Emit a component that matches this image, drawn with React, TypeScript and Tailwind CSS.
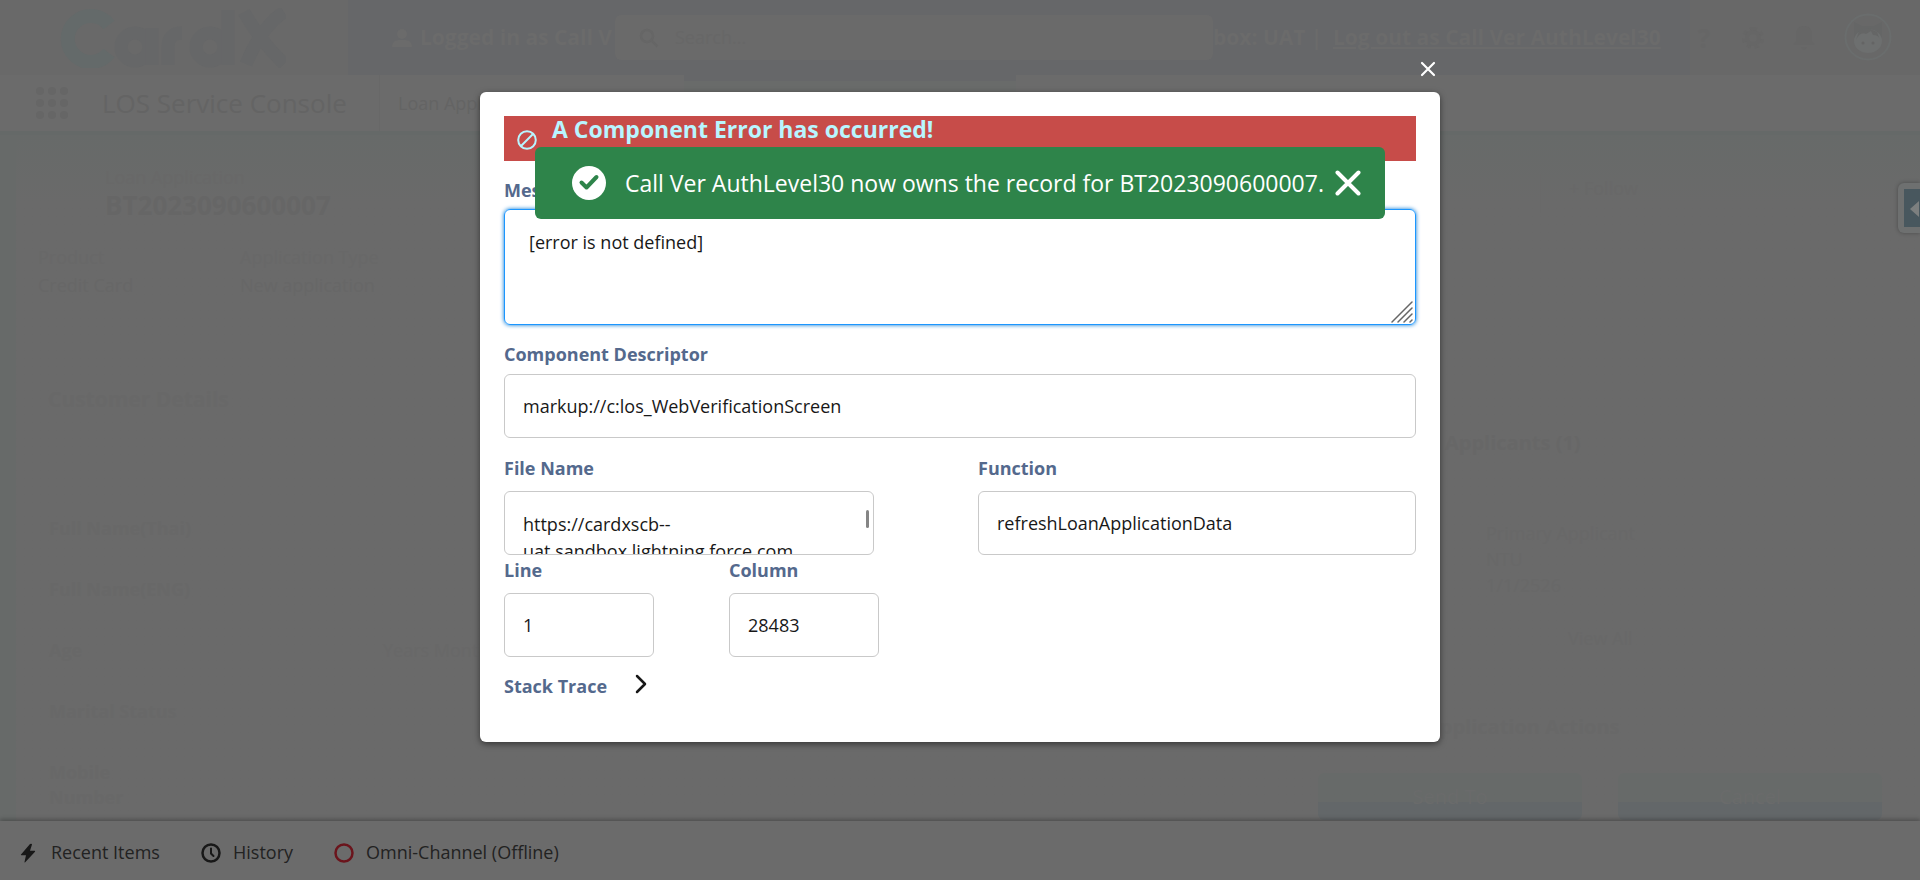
import React from "react";

const label = "block text-[18px] leading-7 font-bold text-[#54698d]";
const field =
  "block h-16 rounded-md border border-[#c9c9c9] bg-white px-[18px] text-[18px] text-[#181818] outline-none";

function Header() {
  return (
    <header className="flex h-[75px] items-stretch text-[#6b6b6b]">
      <div className="flex w-[348px] shrink-0 items-center bg-[#696969] pl-[60px]">
        <svg viewBox="0 0 226 60" className="h-[60px] w-[226px]" fill="none" stroke="#666768" strokeWidth="13" aria-label="CardX">
          <path d="M49 17A23 23 0 1 0 49 45" stroke="#646a6a" strokeWidth="14" />
          <circle cx="75" cy="39" r="14" />
          <path d="M92 20v37M108 57V39q0-14 14-14" />
          <circle cx="150" cy="39" r="14" />
          <path d="M168 2v55M184 4q14 26 40 52M224 4q-22 14-38 52" />
        </svg>
      </div>
      <div className="flex min-w-0 flex-1 items-center bg-[#666769]">
        <div className="flex w-[267px] shrink-0 items-center gap-2 overflow-hidden pl-11 text-[21px] font-bold whitespace-nowrap">
          <svg viewBox="0 0 20 20" className="size-5 shrink-0" fill="#6b6b6b">
            <circle cx="10" cy="6" r="5" />
            <path d="M0 19q0-7 7-7h6q7 0 7 7z" />
          </svg>
          <span>Logged in as Call V</span>
        </div>
        <label className="flex h-[45px] w-[598px] shrink-0 items-center gap-4 rounded-md bg-[#6a6a6a] pl-6">
          <svg viewBox="0 0 20 20" className="size-5 shrink-0" fill="none" stroke="#666666" strokeWidth="2.5">
            <circle cx="8" cy="8" r="6" />
            <path d="m12.500 12.500 6 6" />
          </svg>
          <input aria-label="Search" placeholder="Search..." className="w-full bg-transparent text-[18px] outline-none placeholder:text-[#676767]" />
        </label>
        <div className="w-[108px] shrink-0 text-right text-[21px] font-bold whitespace-nowrap">
          box: UAT |
        </div>
        <a href="#logout" className="ml-3 text-[21px] font-bold whitespace-nowrap underline">
          Log out as Call Ver AuthLevel30
        </a>
      </div>
      <div className="flex w-[230px] shrink-0 items-center gap-7 bg-[#686868] pl-1 text-[#666666]">
        <button aria-label="Help" className="w-5 text-[26px] leading-none font-bold">?</button>
        <button aria-label="Setup">
          <svg viewBox="0 0 22 22" className="size-[22px]" fill="none" stroke="#666666" strokeWidth="4">
            <circle cx="11" cy="11" r="6" />
            <path strokeWidth="3" strokeDasharray="4 4" d="M11 1.500a9.500 9.500 0 1 1 0 19a9.500 9.500 0 1 1 0-19" />
          </svg>
        </button>
        <button aria-label="Notifications">
          <svg viewBox="0 0 24 26" className="h-[26px] w-6" fill="#666666">
            <path d="M12 1q8 0 8 9v6l3 4H1l3-4v-6q0-9 8-9M9 22h6q-1 3-3 3t-3-3" />
          </svg>
        </button>
        <button aria-label="Profile">
          <svg viewBox="0 0 48 50" className="h-[50px] w-12" fill="none" stroke="#6a6d6d" strokeWidth="2">
            <circle cx="24" cy="24" r="22.500" />
            <path fill="#656666" stroke="none" d="M10 9l8 4h12l8-4v16H10z" />
            <ellipse cx="24" cy="28" rx="14" ry="12" fill="#6d6f6f" stroke="none" />
            <path fill="#656666" stroke="none" d="M12 27q4-9 10-6l5-3 2 4q6 0 7 5l-3-8-9-4-9 3z" />
            <circle cx="19" cy="30" r="1.500" fill="#646464" stroke="none" />
            <circle cx="29" cy="30" r="1.500" fill="#646464" stroke="none" />
          </svg>
        </button>
      </div>
    </header>
  );
}

function Nav() {
  return (
    <nav className="flex h-[60px] items-stretch border-b-4 border-[#656968] bg-[#6b6b6b] text-[#646464]">
      <button aria-label="App Launcher" className="flex w-[102px] shrink-0 items-center pl-9">
        <svg viewBox="0 0 32 32" className="size-8" fill="#666666">
          {[4, 16, 28].map((y) => [4, 16, 28].map((x) => <circle key={`${x}-${y}`} cx={x} cy={y} r="4" />))}
        </svg>
      </button>
      <div className="flex w-[278px] shrink-0 items-center border-r border-[#686868] text-[26px] whitespace-nowrap">LOS Service Console</div>
      <a href="#applications" className="flex w-[304px] shrink-0 items-center pl-[18px] text-[18px]">Loan Applications</a>
      <div className="w-[332px] shrink-0 border-t-[6px] border-[#666769] bg-[#696b6a]" />
    </nav>
  );
}

function Row({ name, children }: { name: string; children?: React.ReactNode }) {
  return (
    <div className="flex h-[61px] items-start">
      <div className="w-[110px] font-bold">{name}</div>
      {children}
    </div>
  );
}

function Record() {
  return (
    <main className="flex flex-1 overflow-hidden border-l-[16px] border-[#676a69] bg-linear-to-b from-[#676a69] to-[#6a6a6a] to-10% text-[18px] leading-7 whitespace-nowrap text-[#686868]">
      <div className="w-[1264px] shrink-0 pt-7">
        <div className="pl-[89px]">
          <div>Loan Application</div>
          <h1 className="text-[26px] font-bold text-[#666666]">BT2023090600007</h1>
        </div>
        <div className="flex pt-6 pl-[22px]">
          <div className="w-[202px]">
            <div>Product</div>
            <div className="text-[#676767]">Credit Card</div>
          </div>
          <div>
            <div>Application Type</div>
            <div className="text-[#676767]">New application</div>
          </div>
        </div>
        <h2 className="mt-[86px] pl-8 text-[21px] font-bold">Customer Details</h2>
        <div className="mt-[101px] pl-[33px]">
          <Row name="Full Name(Thai)" />
          <Row name="Full Name(ENG)" />
          <Row name="Age">
            <div className="pl-[224px]">Years Months</div>
          </Row>
          <Row name="Marital Status" />
          <Row name="Mobile" />
        </div>
        <div className="-mt-9 pl-[33px] font-bold">Number</div>
      </div>
      <div className="flex flex-1 flex-col pt-[39px]">
        <div className="ml-[260px] h-[39px] w-[340px] border-l border-[#696969] pl-7">+ Follow</div>
        <h2 className="mt-[216px] pl-[165px] text-[20px] font-bold text-[#676767]">Applicants (1)</h2>
        <div className="mt-[63px] pl-[206px] leading-[26px]">
          <div>Primary Applicant</div>
          <div>NTU</div>
          <div>1/1/2526</div>
        </div>
        <div className="mt-[26px] pl-[288px]">View All</div>
        <h2 className="mt-[61px] pl-[146px] text-[20px] font-bold">Application Actions</h2>
        <div className="mt-8 flex gap-9 pl-[38px] text-[#6a6b6b]">
          <button className="h-[47px] w-[264px] rounded-md bg-linear-to-b from-[#676a69] from-62% to-[#636769] to-62% text-[20px]">Send To</button>
          <button className="h-[47px] w-[264px] rounded-md bg-linear-to-b from-[#676a69] from-62% to-[#636769] to-62% text-[20px]">Cancel</button>
        </div>
      </div>
    </main>
  );
}

function Footer() {
  return (
    <footer className="relative flex h-[59px] items-center bg-[#6b6b6b] pt-1 pl-5 text-[18px] text-[#222222] shadow-[0_-2px_4px_rgba(0,0,0,0.25)]">
      <button className="flex w-[181px] items-center gap-[15px]">
        <svg viewBox="0 0 16 20" className="h-5 w-4" fill="#181818">
          <path d="M10 1 1 11.500q-.5.800.500.800H6L4.500 19q0 .8.700.200L15 8.800q.5-1-.5-1H10L12 1.500q0-1.200-2-.5" />
        </svg>
        Recent Items
      </button>
      <button className="flex w-[133px] items-center gap-3">
        <svg viewBox="0 0 20 20" className="size-5" fill="none" stroke="#181818" strokeWidth="2.500" strokeLinecap="round">
          <circle cx="10" cy="10" r="8.500" />
          <path strokeWidth="2" d="M10 5.500v5l2.500 2.500" />
        </svg>
        History
      </button>
      <button className="flex items-center gap-3">
        <svg viewBox="0 0 20 20" className="size-5" fill="none" stroke="#6b141c" strokeWidth="2.500">
          <circle cx="10" cy="10" r="8.500" />
        </svg>
        Omni-Channel (Offline)
      </button>
    </footer>
  );
}

function ErrorDialog() {
  return (
    <section
      role="dialog"
      aria-label="Component error"
      className="relative mt-[92px] h-fit w-1/2 rounded-md bg-white p-6 pb-[42px] shadow-[0_2px_6px_rgba(0,0,0,0.5)]"
    >
      <button aria-label="Close" className="absolute -top-[31px] right-1">
        <svg viewBox="0 0 16 16" className="size-4" stroke="#fff" strokeWidth="2.200" strokeLinecap="round">
          <path d="m2 2 12 12M14 2 2 14" />
        </svg>
      </button>
      <div className="flex h-[45px] items-start bg-[#c74c49] pl-[13px] text-[#b8f5ff]">
        <svg viewBox="0 0 20 20" className="mt-3.5 size-5" fill="none" stroke="#b8f5ff" strokeWidth="2">
          <circle cx="10" cy="10" r="8.800" />
          <path d="M4 16 16 4" />
        </svg>
        <h2 className="ml-[15px] text-[23px] leading-[26px] font-bold">A Component Error has occurred!</h2>
      </div>
      <label htmlFor="message" className={`${label} mt-[15px]`}>Message</label>
      <div className="relative mt-[5px]">
        <textarea
          id="message"
          defaultValue="[error is not defined]"
          className="block h-[116px] w-full resize-none rounded-md border border-[#1b96ff] px-6 pt-[19px] text-[18px] leading-[27px] text-[#181818] shadow-[0_0_4px_#0176d3] outline-none"
        />
        <svg viewBox="0 0 22 22" className="absolute right-[3px] bottom-[2px] size-[22px]" stroke="#666" strokeWidth="1.500" strokeLinecap="round">
          <path d="M1 21 21 1M7 21 21 7M13 21l8-8M19 21l2-2" />
        </svg>
      </div>
      <label htmlFor="descriptor" className={`${label} mt-[15px]`}>Component Descriptor</label>
      <input id="descriptor" defaultValue="markup://c:los_WebVerificationScreen" className={`${field} mt-1.5 w-full`} />
      <div className="mt-4 flex gap-[104px]">
        <div className="w-[370px]">
          <label htmlFor="file" className={label}>File Name</label>
          <div className="relative mt-[9px]">
            <textarea
              id="file"
              defaultValue="https://cardxscb--uat.sandbox.lightning.force.com"
              className={`${field} w-full resize-none overflow-hidden pt-[19px] leading-[27px]`}
            />
            <div className="absolute top-[19px] right-[5px] h-[18px] w-[3px] rounded-full bg-[#858585]" />
          </div>
        </div>
        <div className="min-w-0 flex-1">
          <label htmlFor="function" className={label}>Function</label>
          <input id="function" defaultValue="refreshLoanApplicationData" className={`${field} mt-[9px] w-full`} />
        </div>
      </div>
      <div className="mt-px flex gap-[75px]">
        <div className="w-[150px]">
          <label htmlFor="line" className={label}>Line</label>
          <input id="line" defaultValue="1" className={`${field} mt-[9px] w-full`} />
        </div>
        <div className="w-[150px]">
          <label htmlFor="column" className={label}>Column</label>
          <input id="column" defaultValue="28483" className={`${field} mt-[9px] w-full`} />
        </div>
      </div>
      <button className="mt-[15px] flex h-7 items-center gap-7">
        <span className={label}>Stack Trace</span>
        <svg viewBox="0 0 12 20" className="mb-1 h-5 w-3" fill="none" stroke="#181818" strokeWidth="2.500" strokeLinecap="round" strokeLinejoin="round">
          <path d="m2 2 8 8-8 8" />
        </svg>
      </button>
    </section>
  );
}

function Toast() {
  return (
    <div role="status" className="absolute top-[147px] left-1/2 flex h-[72px] w-[850px] -translate-x-1/2 items-center rounded-md bg-[#2e844a] pr-6 pl-[37px] text-white">
      <svg viewBox="0 0 34 34" className="size-[34px] shrink-0">
        <circle cx="17" cy="17" r="17" fill="#fff" />
        <path d="m9.500 16.500 5 5 10-10.500" fill="none" stroke="#2e844a" strokeWidth="4" strokeLinecap="round" strokeLinejoin="round" />
      </svg>
      <p className="ml-[19px] flex-1 text-[23px] whitespace-nowrap">Call Ver AuthLevel30 now owns the record for BT2023090600007.</p>
      <button aria-label="Dismiss">
        <svg viewBox="0 0 26 26" className="size-[26px]" stroke="#fff" strokeWidth="4" strokeLinecap="round">
          <path d="m2.500 2.500 21 21M23.500 2.500l-21 21" />
        </svg>
      </button>
    </div>
  );
}

export default function App() {
  return (
    <div className="relative flex h-screen flex-col overflow-hidden bg-[#6a6a6a] font-['Open_Sans','Noto_Sans',sans-serif]">
      <Header />
      <Nav />
      <Record />
      <Footer />
      <button aria-label="Open panel" className="absolute top-[183px] right-0 rounded-l-md bg-[#6e7070] py-1.5 pl-1.5 shadow-[0_0_4px_rgba(0,0,0,0.3)]">
        <svg viewBox="0 0 16 38" className="h-[38px] w-4">
          <path d="M0 0h16v38H0z" fill="#48575e" />
          <path d="m15 12-9 8 9 8z" fill="#7c7f7f" />
        </svg>
      </button>
      <div className="absolute inset-0 flex justify-center">
        <ErrorDialog />
      </div>
      <Toast />
    </div>
  );
}
